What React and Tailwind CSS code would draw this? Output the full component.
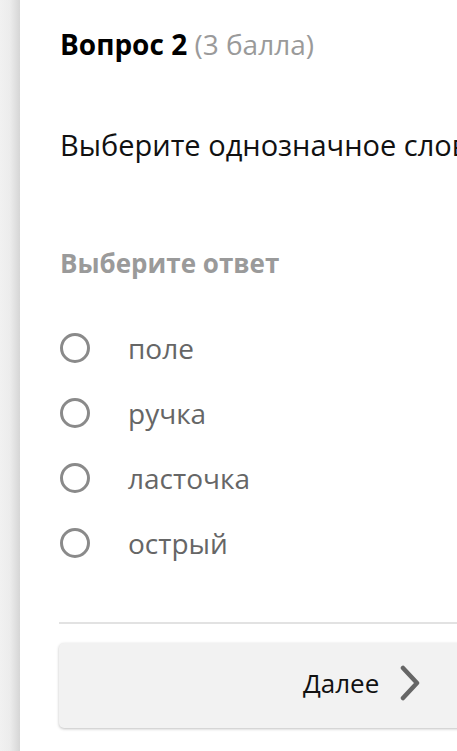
const options = ["поле", "ручка", "ласточка", "острый"];

function Radio() {
  return (
    <span className="w-[30px] h-[30px] rounded-full border-[3.5px] border-[#8a8a8a] shrink-0" />
  );
}

export default function App() {
  return (
    <div
      className="flex h-[751px] w-[457px] overflow-hidden bg-white"
      style={{ fontFamily: '"Open Sans", "Noto Sans", sans-serif' }}
    >
      <div className="w-[20px] shrink-0 bg-gradient-to-r from-[#f1f1f1] via-[#ececec] to-[#d6d6d6]" />
      <div className="flex-1 min-w-0 pl-[40px]">
        <div className="pt-[28px] whitespace-nowrap text-[28px] leading-[32px]">
          <span className="font-bold text-black">Вопрос 2</span>{" "}
          <span className="text-[#9a9a9a]">(3 балла)</span>
        </div>
        <div className="mt-[67px] whitespace-nowrap text-[29px] leading-[36px] text-[#111]">
          Выберите однозначное слово
        </div>
        <div className="mt-[85px] whitespace-nowrap text-[26px] leading-[30px] font-bold text-[#9a9a9a]">
          Выберите ответ
        </div>
        <div className="mt-[55px] flex flex-col gap-[35px]">
          {options.map((o) => (
            <label key={o} className="flex items-center h-[30px]">
              <Radio />
              <span className="ml-[38px] text-[28px] leading-[30px] text-[#666] whitespace-nowrap">
                {o}
              </span>
            </label>
          ))}
        </div>
        <div className="mt-[64px] h-[2px] bg-[#e2e2e2] -ml-[1px] mr-[-20px]" />
        <button
          type="button"
          className="mt-[19px] -ml-[1px] w-[420px] h-[85px] rounded-[5px] bg-[#f2f2f2] shadow-[0_1px_3px_rgba(0,0,0,0.25)] flex items-center pl-[244px] pb-[5px]"
        >
          <span className="text-[26px] leading-[30px] text-[#111]">Далее</span>
          <svg
            className="ml-[21px]"
            width="20"
            height="36"
            viewBox="0 0 20 36"
            fill="none"
            stroke="#666"
            strokeWidth="4.5"
            strokeLinecap="round"
            strokeLinejoin="round"
          >
            <path d="M3 3 L17 18 L3 33" />
          </svg>
        </button>
      </div>
    </div>
  );
}
